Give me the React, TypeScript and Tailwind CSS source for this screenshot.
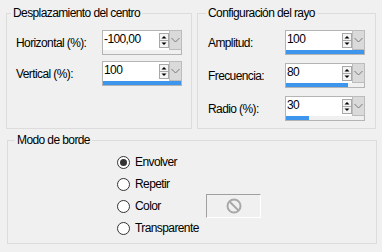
import React from 'react';

function Spinner({ value, pct }: { value: string; pct: number }) {
  return (
    <div className="w-[80px] h-[25px] border border-[#b4b4b4] bg-white flex flex-col shrink-0">
      <div className="h-[19px] flex">
        <span className="flex-1 pl-[1px] leading-[16px] text-black">{value}</span>
        <div className="w-[11px] flex items-center justify-center">
          <svg width="10" height="15" viewBox="0 0 10 15">
            <rect x="0.5" y="0.5" width="9" height="14" fill="#f4f4f4" stroke="#a8a8a8" />
            <line x1="1" y1="7.5" x2="9" y2="7.5" stroke="#a8a8a8" />
            <polygon points="2.5,5.5 5,3 7.5,5.5" fill="#000" />
            <polygon points="2.5,9.5 7.5,9.5 5,12" fill="#000" />
          </svg>
        </div>
        <div className="w-[13px] h-[20px] -mt-[1px] -mr-[1px] bg-[#dadada] border border-[#bcbcbc] flex items-center justify-center">
          <svg width="11" height="8" viewBox="0 0 11 8">
            <polyline points="1.5,2 5.5,6 9.5,2" fill="none" stroke="#7a7a7a" strokeWidth="1" />
          </svg>
        </div>
      </div>
      <div className="h-[4px] bg-[#f0f0f0]">
        <div className="h-full bg-[#3d95ec]" style={{ width: `${pct}%` }} />
      </div>
    </div>
  );
}

function Radio({ checked }: { checked?: boolean }) {
  return (
    <svg width="13" height="13" viewBox="0 0 13 13" className="shrink-0">
      <circle cx="6.5" cy="6.5" r="6" fill="#fff" stroke="#333" />
      {checked && <circle cx="6.5" cy="6.5" r="3.5" fill="#333" />}
    </svg>
  );
}

const left = [
  { label: 'Horizontal (%):', value: '-100,00', pct: 0 },
  { label: 'Vertical (%):', value: '100', pct: 100 },
];

const right = [
  { label: 'Amplitud:', value: '100', pct: 100 },
  { label: 'Frecuencia:', value: '80', pct: 80 },
  { label: 'Radio (%):', value: '30', pct: 30 },
];

const modes = ['Envolver', 'Repetir', 'Color', 'Transparente'];

export default function App() {
  return (
    <div className="w-[382px] h-[252px] bg-[#f0f0f0] pt-[6px] pl-[6px] text-[12px] tracking-[-0.6px] text-black font-['Liberation_Sans',Arial,sans-serif]">
      <div className="flex gap-[5px]">
        <fieldset className="w-[186px] h-[123px] border border-[#dcdcdc] p-0 m-0">
          <legend className="ml-[4px] px-[2px] leading-[14px]">Desplazamiento del centro</legend>
          <div className="pl-[9px] pt-[10px] flex flex-col gap-[6px]">
            {left.map((r) => (
              <div key={r.label} className="flex items-center">
                <span className="w-[86px]">{r.label}</span>
                <Spinner value={r.value} pct={r.pct} />
              </div>
            ))}
          </div>
        </fieldset>
        <fieldset className="w-[179px] h-[123px] border border-[#dcdcdc] p-0 m-0">
          <legend className="ml-[8px] px-[2px] leading-[14px]">Configuración del rayo</legend>
          <div className="pl-[10px] pt-[10px] flex flex-col gap-[8px]">
            {right.map((r) => (
              <div key={r.label} className="flex items-center">
                <span className="w-[77px]">{r.label}</span>
                <Spinner value={r.value} pct={r.pct} />
              </div>
            ))}
          </div>
        </fieldset>
      </div>

      <fieldset className="ml-[1px] mt-[4px] w-[370px] h-[111px] border border-[#dcdcdc] p-0">
        <legend className="ml-[7px] px-[2px] leading-[14px]">Modo de borde</legend>
        <div className="pl-[109px] pt-[4px] flex flex-col">
          {modes.map((m, i) => (
            <div key={m} className="h-[22px] flex items-center">
              <Radio checked={i === 0} />
              <span className="ml-[5px] w-[71px]">{m}</span>
              {m === 'Color' && (
                <div className="w-[55px] h-[24px] border border-[#a0a0a0] border-r-white border-b-white flex items-center justify-center">
                  <svg width="16" height="16" viewBox="0 0 16 16">
                    <circle cx="8" cy="8" r="6.5" fill="none" stroke="#a8a8a8" strokeWidth="2" />
                    <line x1="3.5" y1="3.5" x2="12.5" y2="12.5" stroke="#a8a8a8" strokeWidth="2" />
                  </svg>
                </div>
              )}
            </div>
          ))}
        </div>
      </fieldset>
    </div>
  );
}
